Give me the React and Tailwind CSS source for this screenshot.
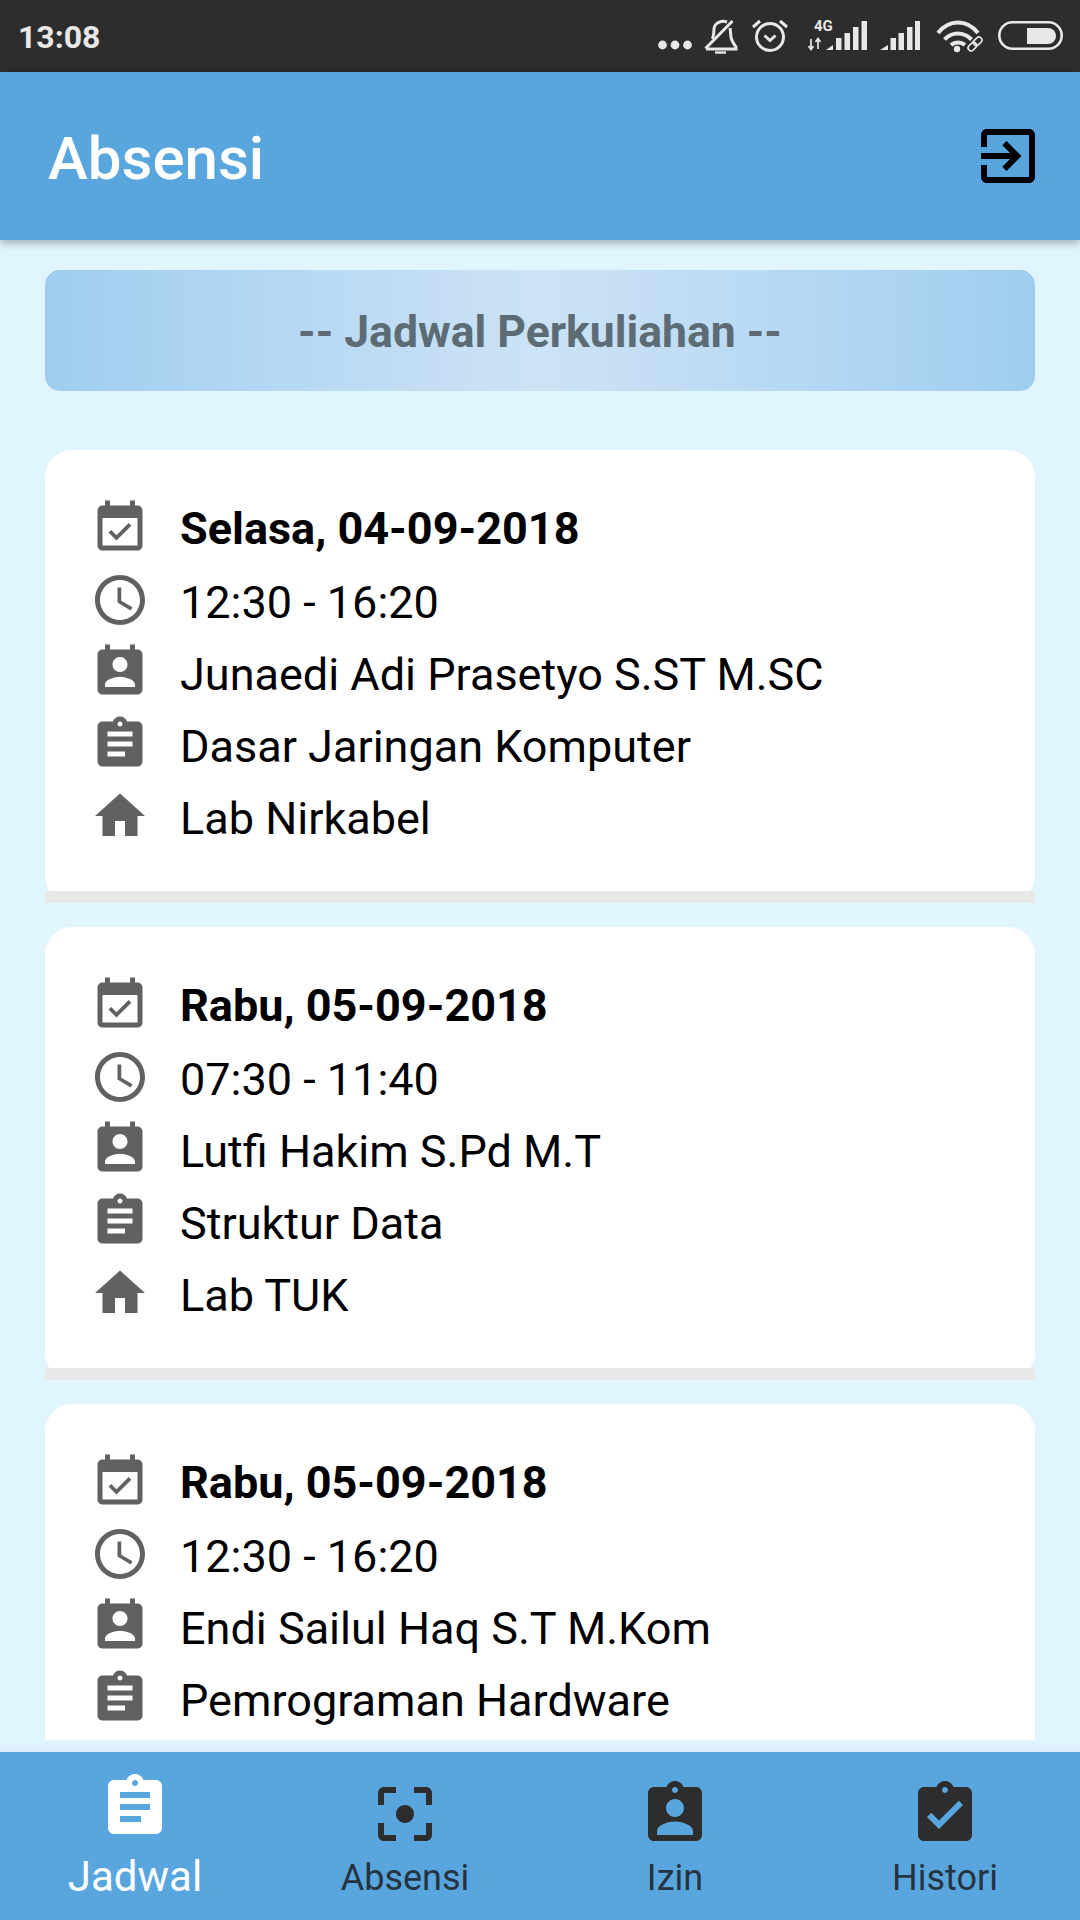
import React from 'react';

const paths = {
  event: 'M16.53 11.06L15.47 10l-4.88 4.88-2.12-2.12-1.06 1.06L10.59 17l5.94-5.94zM19 3h-1V1h-2v2H8V1H6v2H5c-1.11 0-1.99.9-1.99 2L3 19c0 1.1.89 2 2 2h14c1.1 0 2-.9 2-2V5c0-1.1-.9-2-2-2zm0 16H5V8h14v11z',
  clock: 'M11.99 2C6.47 2 2 6.48 2 12s4.47 10 9.99 10C17.52 22 22 17.52 22 12S17.52 2 11.99 2zM12 20c-4.42 0-8-3.58-8-8s3.58-8 8-8 8 3.58 8 8-3.58 8-8 8zm.5-13H11v6l5.25 3.15.75-1.23-4.5-2.67z',
  contact: 'M19 3h-1V1h-2v2H8V1H6v2H5c-1.11 0-2 .9-2 2v14c0 1.1.89 2 2 2h14c1.1 0 2-.9 2-2V5c0-1.1-.9-2-2-2zm-7 3c1.66 0 3 1.34 3 3s-1.34 3-3 3-3-1.34-3-3 1.34-3 3-3zm6 12H6v-1c0-2 4-3.1 6-3.1s6 1.1 6 3.1v1z',
  assignment: 'M19 3h-4.18C14.4 1.84 13.3 1 12 1c-1.3 0-2.4.84-2.82 2H5c-1.1 0-2 .9-2 2v14c0 1.1.9 2 2 2h14c1.1 0 2-.9 2-2V5c0-1.1-.9-2-2-2zm-7 0c.55 0 1 .45 1 1s-.45 1-1 1-1-.45-1-1 .45-1 1-1zm2 14H7v-2h7v2zm3-4H7v-2h10v2zm0-4H7V7h10v2z',
  home: 'M10 20v-6h4v6h5v-8h3L12 3 2 12h3v8z',
  focus: 'M12 9c-1.66 0-3 1.34-3 3s1.34 3 3 3 3-1.34 3-3-1.34-3-3-3zm-7 6H3v4c0 1.1.9 2 2 2h4v-2H5v-4zM5 5h4V3H5c-1.1 0-2 .9-2 2v4h2V5zm14-2h-4v2h4v4h2V5c0-1.1-.9-2-2-2zm0 16h-4v2h4c1.1 0 2-.9 2-2v-4h-2v4z',
  ind: 'M19 3h-4.18C14.4 1.84 13.3 1 12 1c-1.3 0-2.4.84-2.82 2H5c-1.1 0-2 .9-2 2v14c0 1.1.9 2 2 2h14c1.1 0 2-.9 2-2V5c0-1.1-.9-2-2-2zm-7 0c.55 0 1 .45 1 1s-.45 1-1 1-1-.45-1-1 .45-1 1-1zm0 4c1.66 0 3 1.34 3 3s-1.34 3-3 3-3-1.34-3-3 1.34-3 3-3zm6 12H6v-1.4c0-2 4-3.1 6-3.1s6 1.1 6 3.1V19z',
  done: 'M19 3h-4.18C14.4 1.84 13.3 1 12 1c-1.3 0-2.4.84-2.82 2H5c-1.1 0-2 .9-2 2v14c0 1.1.9 2 2 2h14c1.1 0 2-.9 2-2V5c0-1.1-.9-2-2-2zm-7 0c.55 0 1 .45 1 1s-.45 1-1 1-1-.45-1-1 .45-1 1-1zm-2 14l-4-4 1.41-1.41L10 14.17l6.59-6.59L18 9l-8 8z',
  exit: 'M10.09 15.59L11.5 17l5-5-5-5-1.41 1.41L12.67 11H3v2h9.67l-2.58 2.59zM19 3H5c-1.11 0-2 .9-2 2v4h2V5h14v14H5v-4H3v4c0 1.1.89 2 2 2h14c1.1 0 2-.9 2-2V5c0-1.1-.9-2-2-2z',
};

const Icon = ({ name, className }) => (
  <svg viewBox="0 0 24 24" className={className} fill="currentColor">
    <path d={paths[name]} />
  </svg>
);

const StatusIcons = () => (
  <div className="flex text-[#e8e8e8]">
    {/* dots */}
    <svg width="36" height="72" fill="currentColor">
      <circle cx="4.5" cy="45" r="4.4" />
      <circle cx="17" cy="45" r="4.4" />
      <circle cx="29.5" cy="45" r="4.4" />
    </svg>
    {/* bell off */}
    <svg className="ml-[10px]" width="34" height="72" fill="none" stroke="currentColor" strokeWidth="3">
      <path d="M8.500 39c1-3 1.500-6 1.500-10 0-3.500 3-6.500 7-7.500 2-.5 4-.3 6 .5" />
      <path d="M26 28c.5 2 .5 6 1 9 .5 4 3 7 5 10l0 2H2" />
      <path d="M1.500 48.500L28.500 21" />
      <path d="M11 52.500h11" strokeWidth="2.400" />
    </svg>
    {/* alarm */}
    <svg className="ml-[14px]" width="36" height="72" fill="none" stroke="currentColor" strokeWidth="3">
      <circle cx="18" cy="37" r="13.500" />
      <path d="M1 27l7-6M28 21l7 6" />
      <path d="M12.500 35.500l5.500 5 5.500-5" />
    </svg>
    {/* signal with 4G */}
    <svg className="ml-[20px]" width="59" height="72" fill="currentColor">
      <text x="6" y="31" fontSize="15" fontWeight="700" fontFamily="Roboto, sans-serif">4G</text>
      <path d="M3 39v10M0.500 46l2.500 3.500 2.500-3.500M10 49V39M7.500 42l2.500-3.500 2.500 3.500" fill="none" stroke="currentColor" strokeWidth="1.700" />
      <path d="M18 50l7-5v5z" />
      <rect x="28" y="38" width="5.500" height="12" />
      <rect x="36.500" y="33" width="5.500" height="17" />
      <rect x="45" y="27" width="5.500" height="23" />
      <rect x="53.500" y="21" width="5.500" height="29" />
    </svg>
    {/* signal */}
    <svg className="ml-[13px]" width="40" height="72" fill="currentColor">
      <path d="M0 50l8-5v5z" />
      <rect x="10.500" y="38" width="5.500" height="12" />
      <rect x="18.500" y="33" width="5.500" height="17" />
      <rect x="27" y="27" width="5.500" height="23" />
      <rect x="35" y="21" width="5.500" height="29" />
    </svg>
    {/* wifi with link */}
    <svg className="ml-[16px]" width="47" height="72" fill="none" stroke="currentColor">
      <path d="M2 33c11-14 29-14 40 0" strokeWidth="4" />
      <path d="M8.500 39.500c7.500-8 19-8 27 0" strokeWidth="4" />
      <path d="M15 45c4-3.500 10-3.500 14 0" strokeWidth="4" />
      <circle cx="21" cy="49" r="3.200" fill="currentColor" stroke="none" />
      <g strokeWidth="1.700" transform="rotate(-45 39 44)">
        <rect x="30.500" y="41" width="9.500" height="6" rx="3" />
        <rect x="38" y="41" width="9.500" height="6" rx="3" />
      </g>
    </svg>
    {/* battery */}
    <svg className="ml-[15px]" width="65" height="72">
      <rect x="1.300" y="22.300" width="62.400" height="26.400" rx="13.200" fill="none" stroke="currentColor" strokeWidth="2.600" />
      <path d="M29 28h21a8 8 0 0 1 0 16H29z" fill="currentColor" />
    </svg>
  </div>
);

const Row = ({ icon, children, bold }) => (
  <div className="flex h-[72px] items-center">
    <Icon name={icon} className="h-[60px] w-[60px] shrink-0 text-[#616161]" />
    <span className={bold ? 'ml-[30px] pt-[2px] text-[45px] font-bold text-black' : 'ml-[30px] pt-[6px] text-[45px] text-black'}>
      {children}
    </span>
  </div>
);

const schedules = [
  { date: 'Selasa, 04-09-2018', time: '12:30 - 16:20', lecturer: 'Junaedi Adi Prasetyo S.ST M.SC', course: 'Dasar Jaringan Komputer', room: 'Lab Nirkabel' },
  { date: 'Rabu, 05-09-2018', time: '07:30 - 11:40', lecturer: 'Lutfi Hakim S.Pd M.T', course: 'Struktur Data', room: 'Lab TUK' },
  { date: 'Rabu, 05-09-2018', time: '12:30 - 16:20', lecturer: 'Endi Sailul Haq S.T M.Kom', course: 'Pemrograman Hardware' },
];

const ScheduleCard = ({ item }) => (
  <div className="mb-[24px] rounded-[27px] bg-white">
    <div className="px-[45px] pt-[42px] pb-[39px]">
      <Row icon="event" bold>{item.date}</Row>
      <Row icon="clock">{item.time}</Row>
      <Row icon="contact">{item.lecturer}</Row>
      <Row icon="assignment">{item.course}</Row>
      {item.room && <Row icon="home">{item.room}</Row>}
    </div>
    <div className="h-[12px] bg-[#e8e8e8]"></div>
  </div>
);

const tabs = [
  { icon: 'assignment', label: 'Jadwal', active: true },
  { icon: 'focus', label: 'Absensi' },
  { icon: 'ind', label: 'Izin' },
  { icon: 'done', label: 'Histori' },
];

const App = () => {
  return (
    <div className="flex h-screen w-full flex-col overflow-hidden bg-[#e1f5fe] font-['Roboto',sans-serif]">
      {/* Status bar */}
      <div className="flex h-[72px] shrink-0 items-center justify-between bg-[#2d2d2d] pr-[17px] pl-[18px]">
        <span className="pt-[1px] text-[32px] font-bold text-[#e8e8e8]">13:08</span>
        <StatusIcons />
      </div>

      {/* App bar */}
      <header className="relative z-10 flex h-[168px] shrink-0 items-center justify-between bg-[#59a6de] pr-[36px] pl-[48px] shadow-[0_3px_8px_rgba(0,0,0,0.3)]">
        <h1 className="pt-[6px] text-[60px] font-medium text-white">Absensi</h1>
        <Icon name="exit" className="h-[72px] w-[72px] text-black" />
      </header>

      {/* Schedule list */}
      <main className="min-h-0 flex-1 overflow-hidden px-[45px] pt-[30px]">
        <div className="mb-[59px] flex h-[121px] items-center justify-center rounded-[15px] bg-gradient-to-r from-[#9fcdef] via-[#cde3f6] to-[#9fcdef]">
          <span className="pt-[4px] text-[44.5px] font-bold text-[#5c6b74]">-- Jadwal Perkuliahan --</span>
        </div>
        {schedules.map((item, i) => (
          <ScheduleCard key={i} item={item} />
        ))}
      </main>

      {/* Bottom navigation */}
      <div className="h-[12px] shrink-0 bg-gradient-to-b from-[#e1f5fe] to-[#dbedf9]"></div>
      <nav className="grid h-[168px] shrink-0 grid-cols-4 bg-[#59a6de]">
        {tabs.map((tab) => (
          <div key={tab.label} className={tab.active ? 'flex flex-col items-center pt-[19px] text-white' : 'flex flex-col items-center pt-[26px] text-[#2d2d2d]'}>
            <Icon name={tab.icon} className="h-[72px] w-[72px]" />
            <span className={tab.active ? 'mt-[14px] text-[42px] leading-[40px]' : 'mt-[8px] text-[36px] leading-[40px] text-[#263340]'}>
              {tab.label}
            </span>
          </div>
        ))}
      </nav>
    </div>
  );
};

export default App;
